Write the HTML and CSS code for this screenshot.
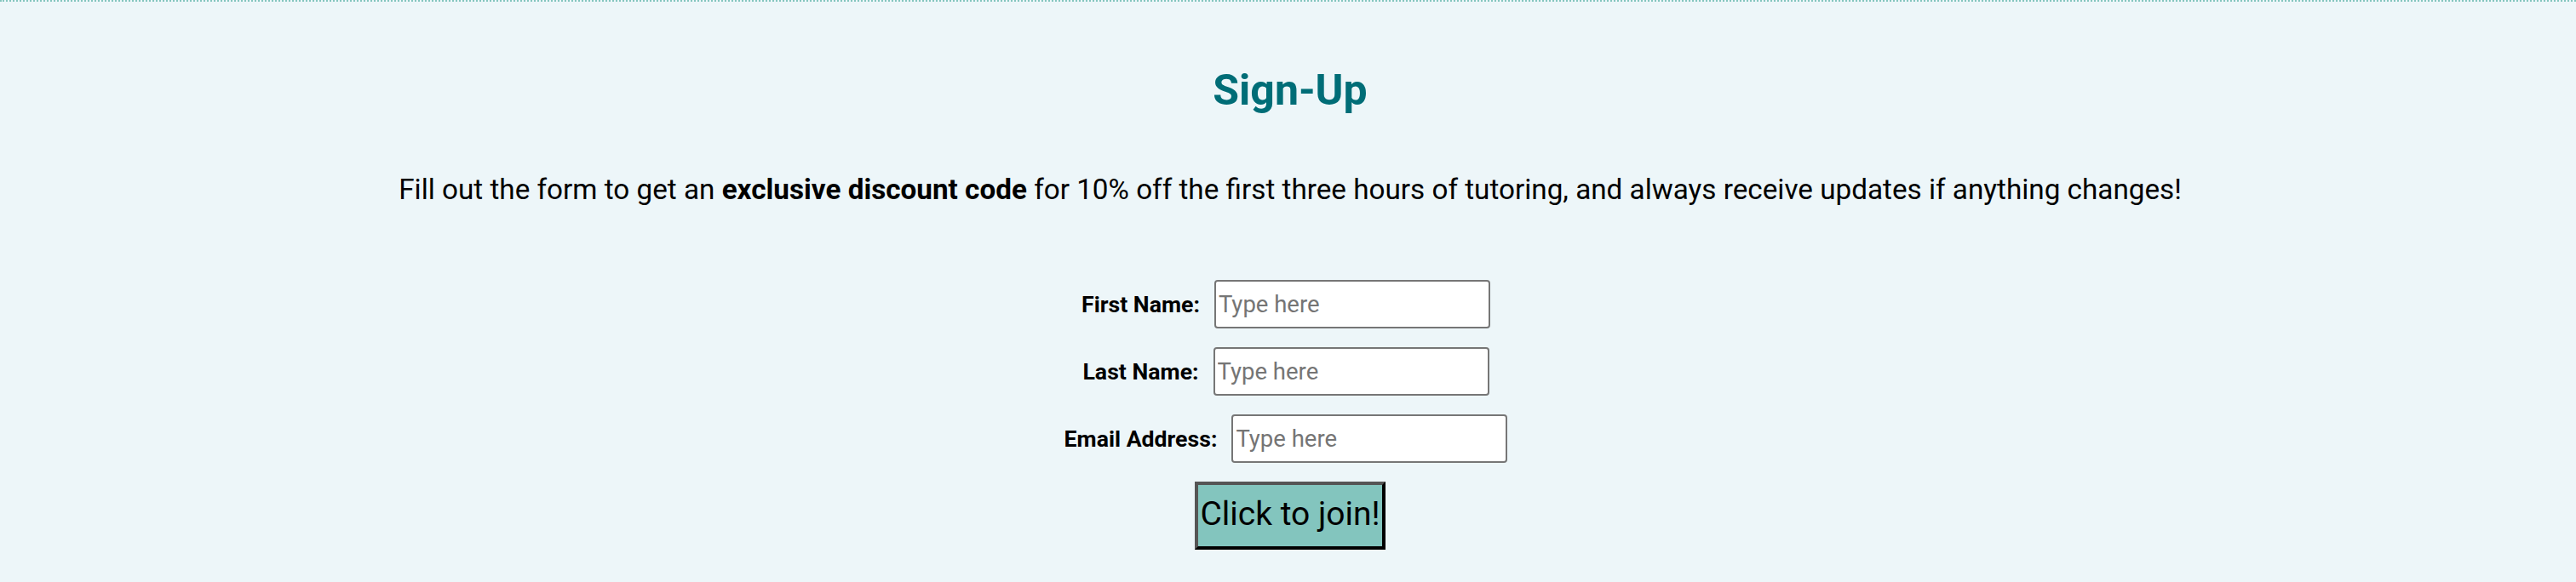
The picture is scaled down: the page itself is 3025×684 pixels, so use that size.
FILE: index.html
```html
<!DOCTYPE html>
<html lang="en">
<head>
<meta charset="utf-8">
<title>Sign-Up</title>
<link rel="stylesheet" href="styles.css">
</head>
<body>
<section class="signup">
  <h2 class="title">Sign-Up</h2>
  <p class="intro">Fill out the form to get an <strong>exclusive discount code</strong> for 10% off the first three hours of tutoring, and always receive updates if anything changes!</p>
  <form class="form">
    <div class="row">
      <label class="label" for="first">First Name:</label>
      <input class="field" id="first" type="text" placeholder="Type here">
    </div>
    <div class="row">
      <label class="label" for="last">Last Name:</label>
      <input class="field" id="last" type="text" placeholder="Type here">
    </div>
    <div class="row">
      <label class="label" for="email">Email Address:</label>
      <input class="field" id="email" type="email" placeholder="Type here">
    </div>
    <button class="join" type="button">Click to join!</button>
  </form>
</section>
</body>
</html>
```

FILE: styles.css
```css
html, body {
  margin: 0;
  padding: 0;
  background: #edf6f9;
}

body {
  font-family: Roboto, "Liberation Sans", sans-serif;
  color: #000;
  height: 684px;
  overflow: hidden;
}

.signup {
  border-top: 2px dotted #83c5be;
  padding: 76px 0 0 5px;
  text-align: center;
}

.title {
  margin: 0;
  font-size: 50px;
  line-height: 56px;
  font-weight: 700;
  color: #006d77;
}

.intro {
  margin: 70px 0 0;
  font-size: 33.25px;
  line-height: 37px;
}

.form {
  margin-top: 88px;
  display: flex;
  flex-direction: column;
  align-items: center;
  gap: 22px;
}

.row {
  display: flex;
  align-items: center;
  gap: 17px;
  padding-right: 10px;
}

.label {
  font-size: 26.67px;
  font-weight: 700;
}

.field {
  box-sizing: border-box;
  width: 324px;
  height: 57px;
  margin: 0;
  padding: 0 3px;
  border: 2px solid #767676;
  border-radius: 4px;
  background: #fff;
  font-family: Roboto, "Liberation Sans", sans-serif;
  font-size: 27.5px;
  color: #000;
}

.field::placeholder {
  color: #757575;
}

.join {
  box-sizing: border-box;
  height: 80px;
  margin: 0;
  padding: 0 2px 4px;
  white-space: nowrap;
  background: #83c5be;
  border: 4px solid;
  border-color: #555 #000 #000 #555;
  font-family: Roboto, "Liberation Sans", sans-serif;
  font-size: 39px;
  color: #000;
}
```
